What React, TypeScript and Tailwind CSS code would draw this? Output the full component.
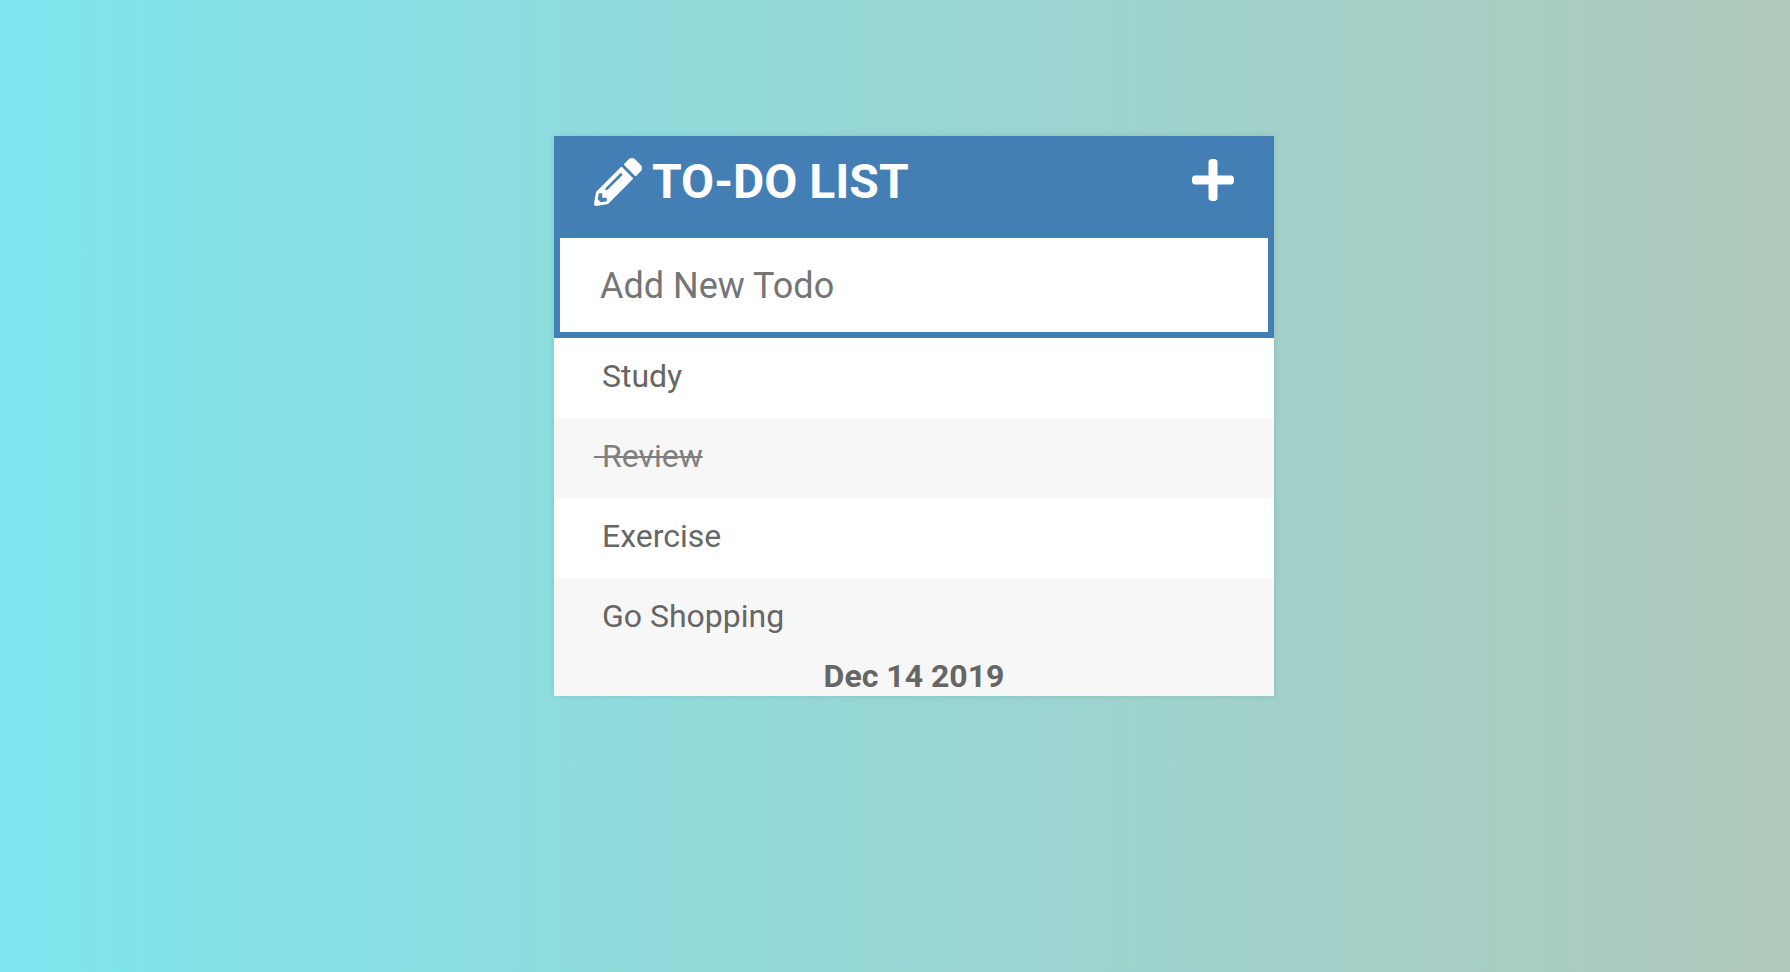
import { useState } from "react";
import type { FormEvent } from "react";
import { FaPencilAlt, FaPlus } from "react-icons/fa";

type Todo = { id: number; text: string; done: boolean };

const initialTodos: Todo[] = [
  { id: 1, text: "Study", done: false },
  { id: 2, text: "Review", done: true },
  { id: 3, text: "Exercise", done: false },
  { id: 4, text: "Go Shopping", done: false },
];

export default function App() {
  const [todos, setTodos] = useState<Todo[]>(initialTodos);
  const [draft, setDraft] = useState("");
  const [formOpen, setFormOpen] = useState(true);

  const toggle = (id: number) =>
    setTodos((list) => list.map((t) => (t.id === id ? { ...t, done: !t.done } : t)));

  const add = (event: FormEvent) => {
    event.preventDefault();
    if (!draft.trim()) return;
    setTodos((list) => [...list, { id: Date.now(), text: draft.trim(), done: false }]);
    setDraft("");
  };

  return (
    <div className="min-h-screen bg-[linear-gradient(to_right,#7fe6ef,#afc8ba)] pt-34 pb-34 pl-[38px] font-['Roboto',sans-serif] text-[#666666]">
      <main className="mx-auto w-full max-w-[720px] bg-[#f7f7f7] shadow-[0_0_6px_rgba(0,0,0,0.1)]">
        <header className="flex h-24 items-center justify-between bg-[#437fb5] px-10 pb-1 text-5xl text-white">
          <h1 className="flex items-center gap-2.5 font-bold">
            <FaPencilAlt aria-hidden="true" />
            TO-DO LIST
          </h1>
          <button
            type="button"
            aria-label="Toggle new todo field"
            onClick={() => setFormOpen((open) => !open)}
            className="cursor-pointer pb-1"
          >
            <FaPlus className="w-[42px]" />
          </button>
        </header>
        {formOpen && (
          <form onSubmit={add}>
            <input
              type="text"
              aria-label="Add New Todo"
              placeholder="Add New Todo"
              value={draft}
              onChange={(event) => setDraft(event.target.value)}
              className="block h-[106px] w-full border-6 border-[#437fb5] bg-white px-10 pt-0.5 text-4xl outline-none placeholder:text-[#757575]"
            />
          </form>
        )}
        <ul className="text-[32px] leading-[76px]">
          {todos.map((todo) => (
            <li key={todo.id} className="bg-white px-10 pb-1 even:bg-[#f7f7f7]">
              <button
                type="button"
                aria-pressed={todo.done}
                onClick={() => toggle(todo.id)}
                className={
                  todo.done
                    ? "block w-full cursor-pointer text-left text-[#808080] line-through decoration-2"
                    : "block w-full cursor-pointer text-left"
                }
              >
                {"\u00a0"}
                {todo.text}
              </button>
            </li>
          ))}
        </ul>
        <p className="text-center text-[32px] leading-9 pb-0.5 font-bold">Dec 14 2019</p>
      </main>
    </div>
  );
}
